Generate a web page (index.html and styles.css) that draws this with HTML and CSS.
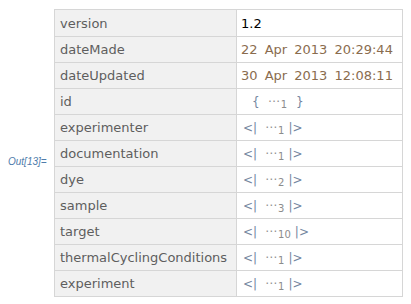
FILE: index.html
```html
<!DOCTYPE html>
<html>
  <head>
    <meta name="viewport" content="width=device-width, initial-scale=1" />
    <title>Out[13]</title>
    <link rel="stylesheet" href="styles.css">
  </head>
  <body>
    <section class="cell">
      <div class="out-label">Out[13]=</div>
      <div class="grid">
        <div class="key">version</div>
        <div class="val plain">1.2</div>

        <div class="key">dateMade</div>
        <div class="val date">22 Apr 2013 20:29:44</div>

        <div class="key">dateUpdated</div>
        <div class="val date">30 Apr 2013 12:08:11</div>

        <div class="key">id</div>
        <div class="val"><span class="list"><span class="br">{</span><span class="dots">&#x22EF;<sub>1</sub></span><span class="br">}</span></span></div>

        <div class="key">experimenter</div>
        <div class="val"><span class="assoc"><span class="br">&lt;|</span><span class="dots">&#x22EF;<sub>1</sub></span><span class="br">|&gt;</span></span></div>

        <div class="key">documentation</div>
        <div class="val"><span class="assoc"><span class="br">&lt;|</span><span class="dots">&#x22EF;<sub>1</sub></span><span class="br">|&gt;</span></span></div>

        <div class="key">dye</div>
        <div class="val"><span class="assoc"><span class="br">&lt;|</span><span class="dots">&#x22EF;<sub>2</sub></span><span class="br">|&gt;</span></span></div>

        <div class="key">sample</div>
        <div class="val"><span class="assoc"><span class="br">&lt;|</span><span class="dots">&#x22EF;<sub>3</sub></span><span class="br">|&gt;</span></span></div>

        <div class="key">target</div>
        <div class="val"><span class="assoc"><span class="br">&lt;|</span><span class="dots">&#x22EF;<sub>10</sub></span><span class="br">|&gt;</span></span></div>

        <div class="key">thermalCyclingConditions</div>
        <div class="val"><span class="assoc"><span class="br">&lt;|</span><span class="dots">&#x22EF;<sub>1</sub></span><span class="br">|&gt;</span></span></div>

        <div class="key">experiment</div>
        <div class="val"><span class="assoc"><span class="br">&lt;|</span><span class="dots">&#x22EF;<sub>1</sub></span><span class="br">|&gt;</span></span></div>
      </div>
    </section>
  </body>
</html>
```

FILE: styles.css
```css
/* ------------------------------ reset ------------------------------ */
* {
  margin: 0;
  padding: 0;
  box-sizing: border-box;
}
body {
  background: #fff;
  font-family: "DejaVu Sans", Verdana, sans-serif;
}

/* ------------------------------ structure ------------------------------ */
.cell {
  display: flex;
  padding-top: 9px;
}
.out-label {
  width: 54px;
  padding-left: 8px;
  padding-top: 16px;
  align-self: center;
  font-family: "Liberation Sans", Arial, sans-serif;
  font-style: italic;
  font-size: 10px;
  color: #4f7cab;
}
.grid {
  display: grid;
  grid-template-columns: 182px 165px;
  grid-template-rows: 27px;
  grid-auto-rows: 26px;
  border: 1px solid #d6d6d6;
  border-bottom: 0;
}
.key,
.val {
  display: flex;
  align-items: center;
  border-bottom: 1px solid #d6d6d6;
  font-size: 13px;
  white-space: nowrap;
}
.key {
  padding-left: 5px;
  background: #f1f1f1;
  border-right: 1px solid #d6d6d6;
  color: #5e5e5e;
}
.val {
  padding-left: 4px;
}

/* ------------------------------ values ------------------------------ */
.val.plain {
  color: #000;
}
.val.date {
  color: #8a6c4e;
  word-spacing: 3px;
}
.list,
.assoc {
  display: flex;
  align-items: center;
  font-size: 12px;
}
.list {
  padding-left: 11px;
}
.assoc {
  padding-left: 2px;
}
.br {
  color: #7486a0;
}
.dots {
  color: #8f8f8f;
  padding: 0 4px 0 8px;
  font-size: 12px;
}
.dots sub {
  font-size: 10px;
  color: #8c8c8c;
  padding-left: 1px;
  vertical-align: -3px;
}
.list .dots {
  padding: 0 9px 0 8px;
}
```
